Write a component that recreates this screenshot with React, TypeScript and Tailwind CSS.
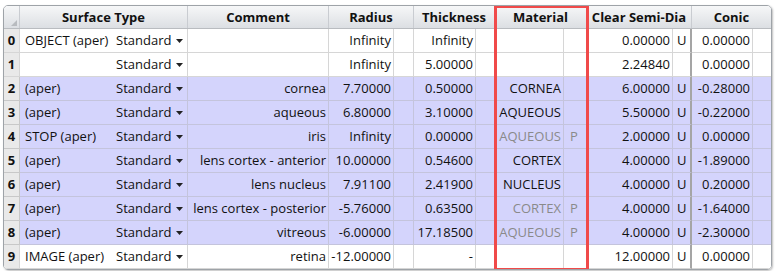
import React from "react";

type Row = {
  n: number;
  label: string;
  comment: string;
  radius: string;
  thick: string;
  mat: string;
  matP: string;
  clear: string;
  clearU: string;
  conic: string;
  hl: boolean;
  dim?: boolean;
};

const ROWS: Row[] = [
  { n: 0, label: "OBJECT (aper)", comment: "", radius: "Infinity", thick: "Infinity", mat: "", matP: "", clear: "0.00000", clearU: "U", conic: "0.00000", hl: false },
  { n: 1, label: "", comment: "", radius: "Infinity", thick: "5.00000", mat: "", matP: "", clear: "2.24840", clearU: "", conic: "0.00000", hl: false },
  { n: 2, label: "(aper)", comment: "cornea", radius: "7.70000", thick: "0.50000", mat: "CORNEA", matP: "", clear: "6.00000", clearU: "U", conic: "-0.28000", hl: true },
  { n: 3, label: "(aper)", comment: "aqueous", radius: "6.80000", thick: "3.10000", mat: "AQUEOUS", matP: "", clear: "5.50000", clearU: "U", conic: "-0.22000", hl: true },
  { n: 4, label: "STOP (aper)", comment: "iris", radius: "Infinity", thick: "0.00000", mat: "AQUEOUS", matP: "P", clear: "2.00000", clearU: "U", conic: "0.00000", hl: true, dim: true },
  { n: 5, label: "(aper)", comment: "lens cortex - anterior", radius: "10.00000", thick: "0.54600", mat: "CORTEX", matP: "", clear: "4.00000", clearU: "U", conic: "-1.89000", hl: true },
  { n: 6, label: "(aper)", comment: "lens nucleus", radius: "7.91100", thick: "2.41900", mat: "NUCLEUS", matP: "", clear: "4.00000", clearU: "U", conic: "0.20000", hl: true },
  { n: 7, label: "(aper)", comment: "lens cortex - posterior", radius: "-5.76000", thick: "0.63500", mat: "CORTEX", matP: "P", clear: "4.00000", clearU: "U", conic: "-1.64000", hl: true, dim: true },
  { n: 8, label: "(aper)", comment: "vitreous", radius: "-6.00000", thick: "17.18500", mat: "AQUEOUS", matP: "P", clear: "4.00000", clearU: "U", conic: "-2.30000", hl: true, dim: true },
  { n: 9, label: "IMAGE (aper)", comment: "retina", radius: "-12.00000", thick: "-", mat: "", matP: "", clear: "12.00000", clearU: "U", conic: "0.00000", hl: false },
];

const COLS =
  "grid-cols-[16px_95px_73px_141px_65px_20px_62px_19px_69px_23px_86px_19px_61px_18px]";

function Arrow() {
  return (
    <svg width="7" height="4" viewBox="0 0 7 4" className="ml-[5px] mt-[1px]">
      <path d="M0 0h7L3.5 4z" fill="#222" />
    </svg>
  );
}

function Head({ span, children }: { span: string; children: React.ReactNode }) {
  return (
    <div className={`${span} flex items-center justify-center border-r border-[#c9ccd1] font-bold`}>
      {children}
    </div>
  );
}

export default function App() {
  return (
    <div className="w-[777px] h-[271px] bg-white pl-[3px] pt-[5px] text-[13px] text-[#111] leading-none [font-family:'Open_Sans',sans-serif]">
      <div className="relative w-[769px] rounded-[5px] border border-[#9ea3a8] shadow-[1px_1px_2px_rgba(0,0,0,0.25)] overflow-hidden">
        {/* header */}
        <div className={`grid ${COLS} h-[23px] border-b border-[#b9bcc0] bg-gradient-to-b from-[#f6f7f8] to-[#dcdfe3]`}>
          <div className="relative border-r border-[#c9ccd1]">
            <svg width="6" height="6" className="absolute right-[2px] bottom-[2px]">
              <path d="M6 0V6H0z" fill="#b8bbbf" />
            </svg>
          </div>
          <Head span="col-span-2">Surface Type</Head>
          <Head span="col-span-1">Comment</Head>
          <Head span="col-span-2">Radius</Head>
          <Head span="col-span-2">Thickness</Head>
          <Head span="col-span-2">Material</Head>
          <Head span="col-span-2">Clear Semi-Dia</Head>
          <div className="col-span-2 flex items-center justify-center font-bold">Conic</div>
        </div>

        {/* rows */}
        {ROWS.map((r) => {
          const line = r.hl ? "border-[#c4c4dc]" : "border-[#d6d6d6]";
          const bg = r.hl ? "bg-[#d4d4fc]" : "bg-white";
          const cell = `flex items-center h-full border-b ${line} whitespace-nowrap overflow-hidden`;
          const dimText = r.dim ? "text-[#8a8a8a]" : "";
          return (
            <div key={r.n} className={`grid ${COLS} h-[24px] ${bg}`}>
              <div className={`${cell} justify-center bg-[#e9e9e9] border-r border-[#c8c8c8] font-bold`}>{r.n}</div>
              <div className={`${cell} pl-[5px]`}>{r.label}</div>
              <div className={`${cell} pl-[1px] border-r`}>
                Standard
                <Arrow />
              </div>
              <div className={`${cell} justify-end pr-[2px] border-r`}>{r.comment}</div>
              <div className={`${cell} justify-end pr-[2px] border-r`}>{r.radius}</div>
              <div className={`${cell} border-r`}></div>
              <div className={`${cell} justify-end pr-[2px] border-r`}>{r.thick}</div>
              <div className={`${cell} border-r`}></div>
              <div className={`${cell} justify-end pr-[2px] border-r ${dimText}`}>{r.mat}</div>
              <div className={`${cell} pl-[6px] border-r ${dimText}`}>{r.matP}</div>
              <div className={`${cell} justify-end pr-[2px] border-r`}>{r.clear}</div>
              <div className={`${cell} pl-[4px] border-r-2 border-r-[#a5a5a5]`}>{r.clearU}</div>
              <div className={`${cell} justify-end pr-[2px] border-r`}>{r.conic}</div>
              <div className={`${cell}`}></div>
            </div>
          );
        })}

        {/* highlight box over Material column */}
        <div className="absolute left-[490px] top-[-1px] w-[95px] h-[266px] border-[3px] border-[#f04a4a] pointer-events-none" />
      </div>
    </div>
  );
}
